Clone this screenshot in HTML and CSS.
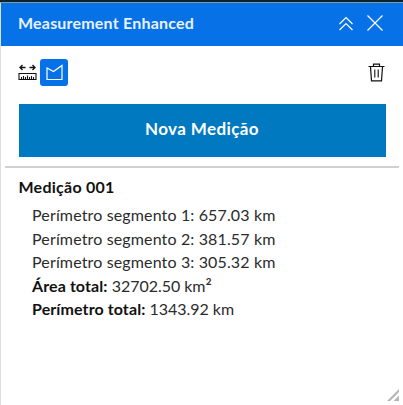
FILE: index.html
```html
<!DOCTYPE html>
<html lang="pt">
<head>
<meta charset="utf-8">
<title>Measurement Enhanced</title>
<link rel="stylesheet" href="styles.css">
</head>
<body>
<div class="map-strip"></div>
<section class="panel">
  <header class="header">
    <h1 class="title">Measurement Enhanced</h1>
    <svg class="collapse" width="16" height="18" viewBox="0 0 16 18"><path d="M1.500 9 8 2.500 14.500 9M1.500 15 8 8.500 14.500 15"/></svg>
    <svg class="close" width="18" height="18" viewBox="0 0 18 18"><path d="M1.500 1.500 16.500 16.500M16.500 1.500 1.500 16.500"/></svg>
  </header>
  <div class="toolbar">
    <svg class="ruler" width="19" height="17" viewBox="0 0 19 17">
      <path d="M2 3.500H7.500M11.500 3.500H17M4.500 1 2 3.500 4.500 6M14.500 1 17 3.500 14.500 6" stroke-width="1.300"/>
      <path d="M1 9.500H18V15.500H1ZM3.500 15V13M5.500 15V12M7.500 15V13M9.500 15V11.500M11.500 15V13M13.500 15V12M15.500 15V13" stroke-width="1.100"/>
    </svg>
    <div class="tool-active">
      <svg width="17" height="17" viewBox="0 0 17 17"><path d="M1 4 7.500 7.500 16 1.500V15.500H1Z"/></svg>
    </div>
    <svg class="trash" width="17" height="19" viewBox="0 0 17 19">
      <path d="M.5 3.500H16.500M5.500 3V1.200H11.500V3M2.500 4 3.500 17.800H13.500L14.500 4" stroke-width="1.200"/>
      <path d="M6.800 6.500V14.500M10.200 6.500V14.500" stroke-width="1.100"/>
    </svg>
  </div>
  <div class="button">Nova Medição</div>
  <div class="divider"></div>
  <div class="results">
    <h2 class="name">Medição 001</h2>
    <ul class="list">
      <li>Perímetro segmento 1: 657.03 km</li>
      <li>Perímetro segmento 2: 381.57 km</li>
      <li>Perímetro segmento 3: 305.32 km</li>
      <li class="total"><b>Área total:</b> 32702.50 km<span class="unit">²</span></li>
      <li class="total"><b>Perímetro total:</b> 1343.92 km</li>
    </ul>
  </div>
  <svg class="grip" width="12" height="12" viewBox="0 0 12 12"><path d="M0 12 12 0V3L3 12ZM6.500 12 12 6.500V12Z"/></svg>
</section>
</body>
</html>
```
FILE: styles.css
```css
* { box-sizing: border-box; margin: 0; padding: 0; }
body {
  height: 405px;
  overflow: hidden;
  display: flex;
  flex-direction: column;
  background: #fff;
  color: #111;
  font-family: Lato, "Open Sans", sans-serif;
}
svg { display: block; flex: none; fill: none; stroke: #111; }
.map-strip { height: 3px; flex: none; background: #06252f; border-bottom: 1px solid #8a979e; }
.panel { position: relative; flex: 1; border-left: 1px solid #dedede; }
.header {
  height: 43px;
  padding: 0 19px 3px 17px;
  display: flex;
  align-items: center;
  background: #0771e8;
}
.header svg { stroke: #fff; stroke-width: 1.2; }
.title {
  flex: 1;
  padding-bottom: 1px;
  color: #e8f2fe;
  font-size: 16px;
  line-height: 20px;
  font-weight: 700;
  letter-spacing: .2px;
}
.close { margin-left: 12px; }
.collapse { margin-top: 1px; }
.toolbar { height: 58px; padding: 13px 18px 0 17px; display: flex; }
.ruler { margin-top: 5px; }
.tool-active {
  width: 28px;
  height: 27px;
  margin-left: 3px;
  display: grid;
  place-items: center;
  background: #0771e8;
  border-radius: 3px;
}
.tool-active svg { stroke: #fff; stroke-width: 1.2; }
.trash { margin: 4px 0 0 auto; }
.button {
  height: 53px;
  margin: 0 17.5px 0 17.5px;
  background: #0079c1;
  color: #fff;
  font-size: 17px;
  font-weight: 700;
  line-height: 50px;
  letter-spacing: .4px;
  text-align: center;
}
.divider { height: 2px; margin: 9px 4px 0; background: #d0d2d1; }
.results { padding: 7px 0 0 17.5px; }
.name { font-size: 16px; line-height: 24px; font-weight: 700; letter-spacing: .25px; }
.list {
  padding: 4px 0 0 13.5px;
  list-style: none;
  color: #2b2b2b;
  font-size: 16px;
  line-height: 23.5px;
  letter-spacing: .14px;
}
.list b { color: #111; font-weight: 700; letter-spacing: .1px; }
.total { letter-spacing: -.03px; }
.unit { position: relative; top: 2px; font-size: 19px; line-height: 1; }
.grip { position: absolute; right: 4px; bottom: 4px; fill: #b5b5b5; stroke: none; }
```
